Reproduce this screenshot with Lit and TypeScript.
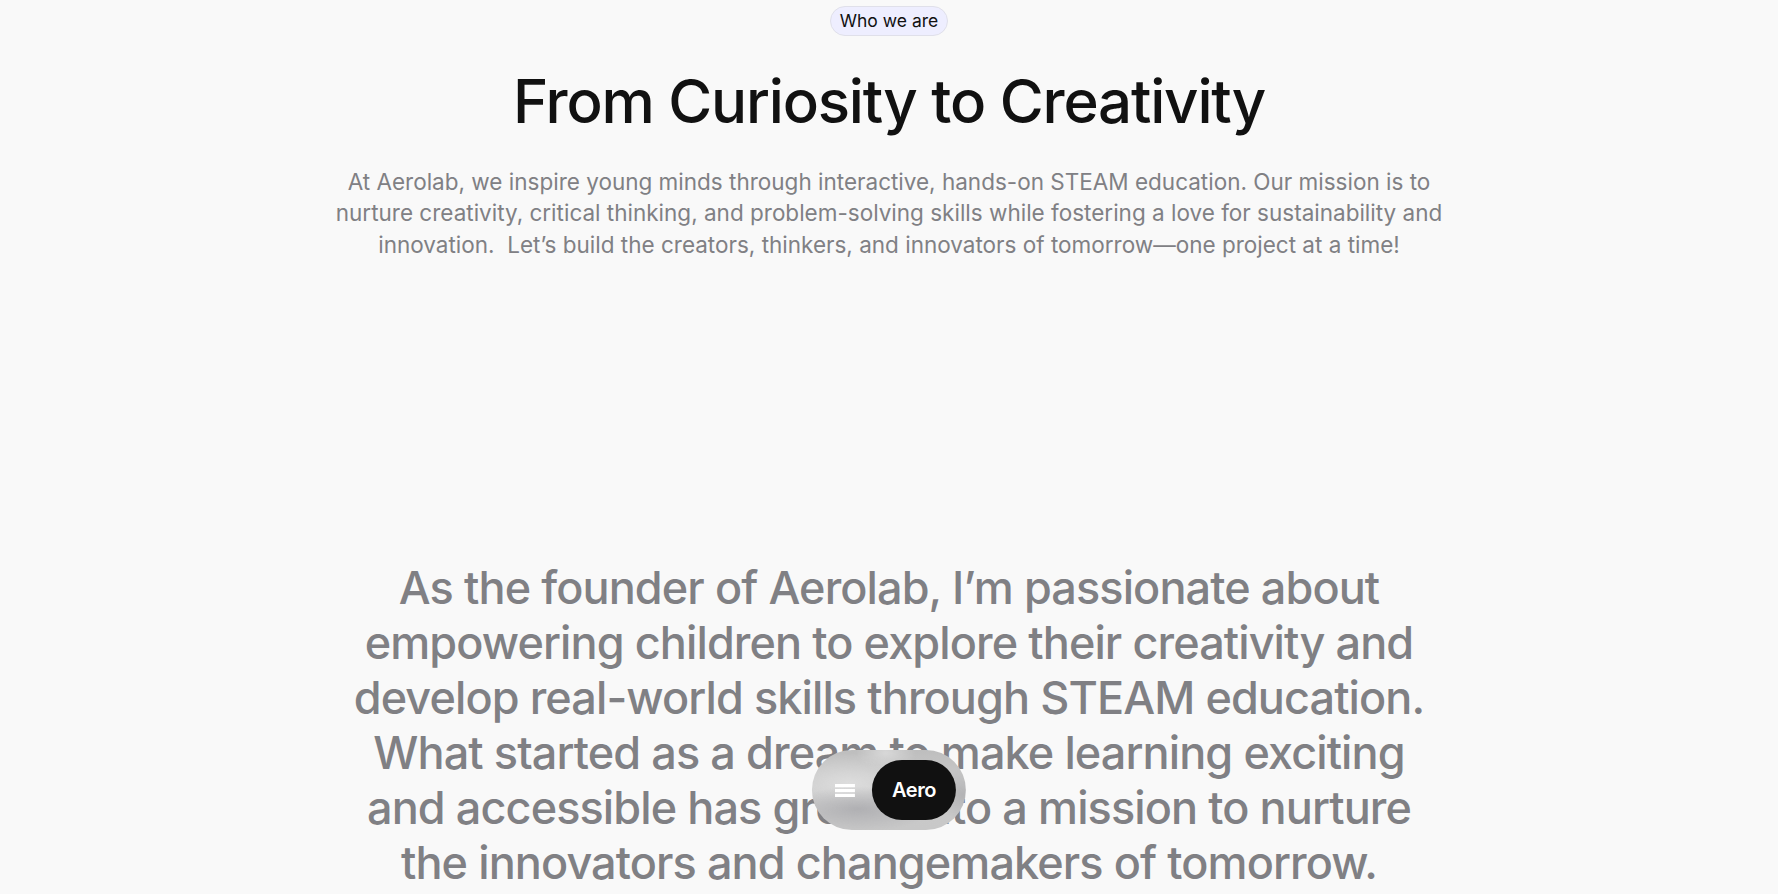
import { LitElement, html, css } from "lit";
import { customElement } from "lit/decorators.js";

@customElement("app-root")
export class AppRoot extends LitElement {
  static styles = css`
    :host {
      display: block;
      min-height: 100vh;
      background: #f9f9f9;
      color: #111;
      font-family: Inter, sans-serif;
      text-align: center;
    }
    main,
    .dock {
      zoom: 1.25;
    }
    main {
      display: flex;
      flex-direction: column;
      align-items: center;
      gap: 240px;
      padding-top: 5px;
    }
    .intro {
      display: flex;
      flex-direction: column;
      align-items: center;
      gap: 24px;
    }
    .tag {
      padding: 0 7px;
      border: 1px solid #e0e0ea;
      border-radius: 12px;
      background: #eeeeff;
      font-size: 14px;
      line-height: 22px;
    }
    h1,
    p {
      margin: 0;
    }
    h1 {
      font-size: 48px;
      line-height: 56px;
      font-weight: 500;
      letter-spacing: -0.02em;
    }
    .lead {
      max-width: 900px;
      color: #808084;
      font-size: 18px;
      line-height: 1.4;
      white-space: pre-wrap;
    }
    .story {
      max-width: 880px;
      color: #808084;
      font-size: 36px;
      line-height: 44px;
      font-weight: 500;
      letter-spacing: -0.02em;
    }
    .dock {
      position: fixed;
      bottom: 51px;
      left: 50%;
      transform: translateX(-50%);
      display: flex;
      align-items: center;
      gap: 14px;
      padding: 8px 8px 8px 18px;
      border-radius: 32px;
      background:
        radial-gradient(ellipse 22px 20px at 98% 56%, #adadafcc, #adadaf00),
        radial-gradient(ellipse 24px 14px at 48% 4%, #d8d8d8, #d8d8d800),
        radial-gradient(ellipse 60px 18px at 30% 74%, #b0b0b3, #b0b0b300),
        radial-gradient(ellipse 60px 24px at 24% 42%, #dddddd, #dddddd00),
        linear-gradient(#bebebe, #cacaca 45%, #c8c8c8);
    }
    .menu {
      display: flex;
      padding: 0;
      border: 0;
      background: none;
    }
    .brand {
      padding: 0 16px;
      border-radius: 24px;
      background: #111;
      color: #fff;
      font-size: 16px;
      line-height: 48px;
      font-weight: 600;
      letter-spacing: -0.02em;
      text-decoration: none;
    }
  `;

  render() {
    return html`
      <main>
        <section class="intro">
          <span class="tag">Who we are</span>
          <h1>From Curiosity to Creativity</h1>
          <p class="lead">At Aerolab, we inspire young minds through interactive, hands-on STEAM education. Our mission is to nurture creativity, critical thinking, and problem-solving skills while fostering a love for sustainability and innovation.  Let’s build the creators, thinkers, and innovators of tomorrow—one project at a time!</p>
        </section>
        <p class="story">As the founder of Aerolab, I’m passionate about empowering children to explore their creativity and develop real-world skills through STEAM education. What started as a dream to make learning exciting and accessible has grown into a mission to nurture the innovators and changemakers of tomorrow.</p>
      </main>
      <nav class="dock" aria-label="Main">
        <button class="menu" aria-label="Open menu">
          <svg width="16" height="12" viewBox="0 0 16 12" fill="#fff"><path d="M0 .8h16v2.6H0zM0 4.7h16v2.6H0zM0 8.6h16v2.6H0z" /></svg>
        </button>
        <a class="brand" href="#">Aero</a>
      </nav>
    `;
  }
}
